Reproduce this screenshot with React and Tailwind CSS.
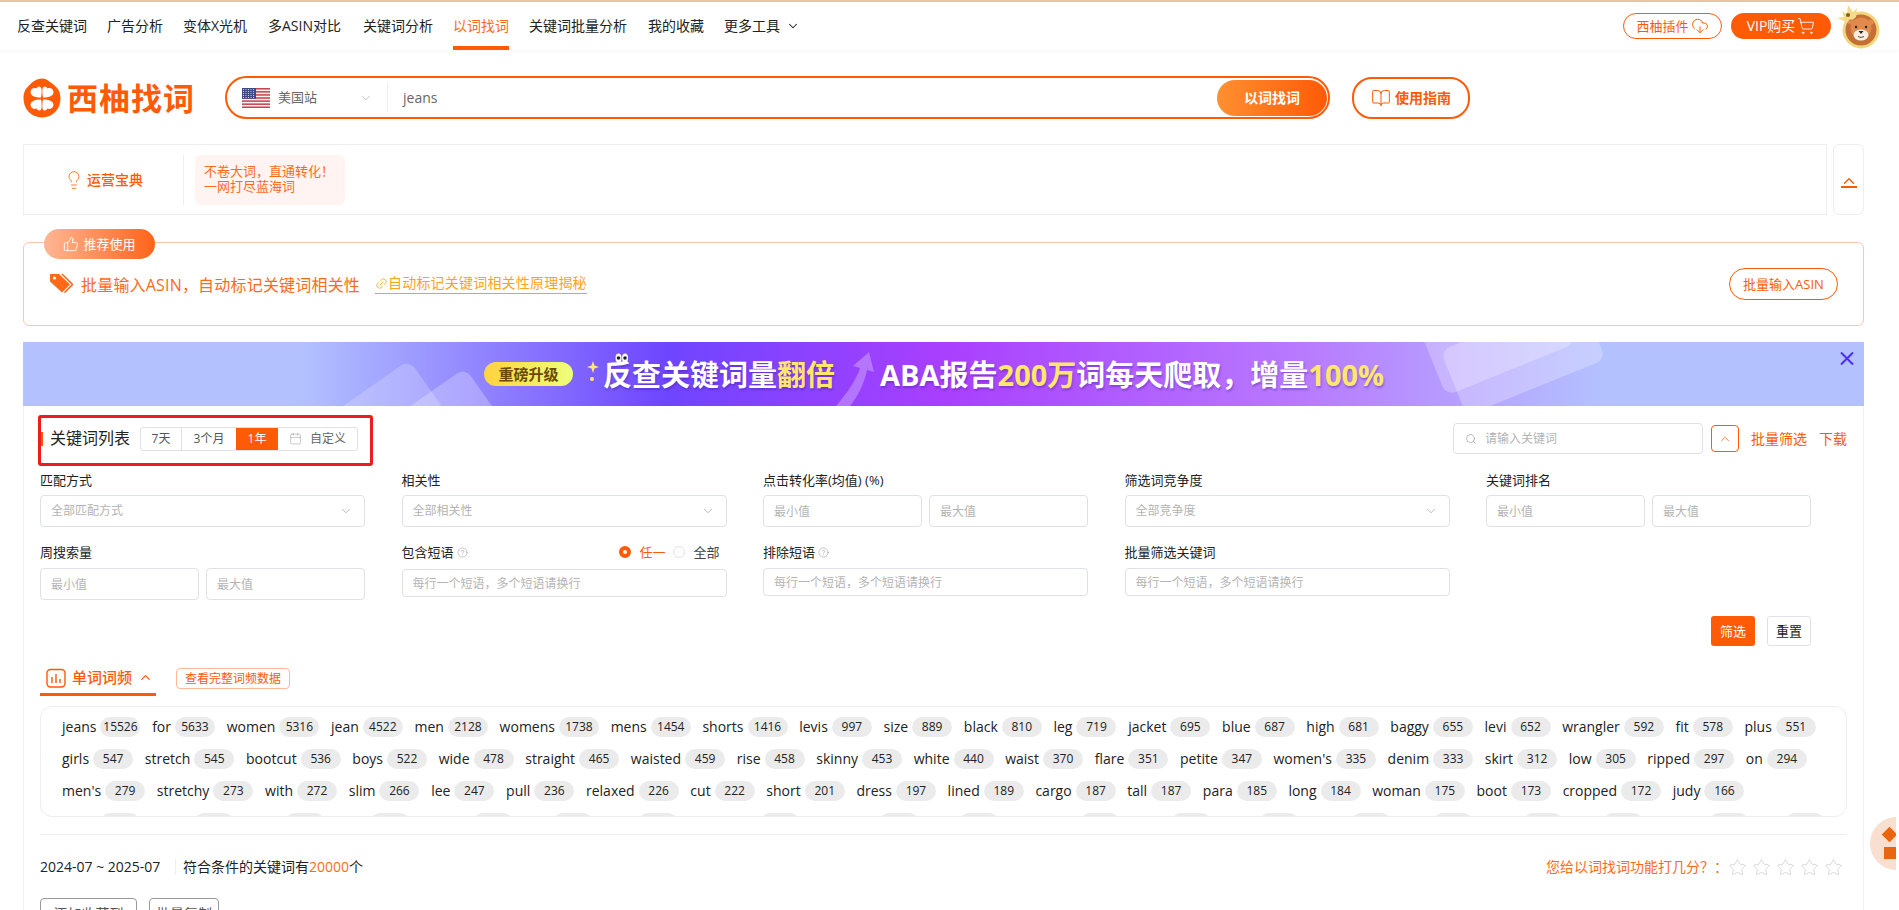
import React from "react";
import { ChevronDown, ChevronUp, Search, Lightbulb, ThumbsUp, Link2, BookOpen, ShoppingCart, CloudDownload, Calendar, CircleHelp, Star } from "lucide-react";

const navItems = [
  ["反查关键词", "w-[70px]"],
  ["广告分析", "w-[56px]"],
  ["变体X光机", "w-[65px]"],
  ["多ASIN对比", "w-[75px]"],
  ["关键词分析", "w-[70px]"],
  ["以词找词", "w-[56px]"],
  ["关键词批量分析", "w-[99px]"],
  ["我的收藏", "w-[56px]"],
  ["更多工具", "w-[73px]"],
];

const wordRows = [
  [["jeans", 15526], ["for", 5633], ["women", 5316], ["jean", 4522], ["men", 2128], ["womens", 1738], ["mens", 1454], ["shorts", 1416], ["levis", 997], ["size", 889], ["black", 810], ["leg", 719], ["jacket", 695], ["blue", 687], ["high", 681], ["baggy", 655], ["levi", 652], ["wrangler", 592], ["fit", 578], ["plus", 551]],
  [["girls", 547], ["stretch", 545], ["bootcut", 536], ["boys", 522], ["wide", 478], ["straight", 465], ["waisted", 459], ["rise", 458], ["skinny", 453], ["white", 440], ["waist", 370], ["flare", 351], ["petite", 347], ["women's", 335], ["denim", 333], ["skirt", 312], ["low", 305], ["ripped", 297], ["on", 294]],
  [["men's", 279], ["stretchy", 273], ["with", 272], ["slim", 266], ["lee", 247], ["pull", 236], ["relaxed", 226], ["cut", 222], ["short", 201], ["dress", 197], ["lined", 189], ["cargo", 187], ["tall", 187], ["para", 185], ["long", 184], ["woman", 175], ["boot", 173], ["cropped", 172], ["judy", 166]],
];

const row4Gaps = [38, 54, 51, 45, 63, 40, 45, 82, 79, 40, 81, 51, 48, 52, 42, 50, 40, 66, 36];

function Flag() {
  const stripes = [0, 1, 2, 3, 4, 5, 6];
  return (
    <svg width="28" height="20" viewBox="0 0 28 20" className="shrink-0">
      <rect width="28" height="20" fill="#f4f1f1" />
      {stripes.map((i) => (
        <rect key={i} y={i * 3.08} width="28" height="1.54" fill="#c8454f" />
      ))}
      <rect width="14" height="10.8" fill="#3c4a86" />
      {[1.5, 3.5, 5.5, 7.5, 9.5].map((y) =>
        [1.5, 4, 6.5, 9, 11.5].map((x) => <circle key={x + "-" + y} cx={x} cy={y} r="0.55" fill="#dfe3f2" />)
      )}
    </svg>
  );
}

function LogoMark() {
  return (
    <svg width="38" height="40" viewBox="0 0 38 40" className="shrink-0">
      <path d="M19 0.5C24 0.5 27 4 31 7C35 10 37.5 14 37.5 20.5C37.5 31 29.5 39.5 19 39.5C8.5 39.5 0.5 31 0.5 20.5C0.5 14 2.5 11 5.5 8C9 4.5 13 0.5 19 0.5Z" fill="#ff5a06" />
      <path d="M18 19.5C12 19.5 6.8 17.6 7.6 13.4C8.2 10 11.6 9.6 13.8 10.4C14.4 7.6 18.4 7.6 18.6 11.6C18.8 14.4 18.4 17.8 18 19.5Z" fill="#fff" />
      <path d="M20 19.5C26 19.5 31.2 17.6 30.4 13.4C29.8 10 26.4 9.6 24.2 10.4C23.6 7.6 19.6 7.6 19.4 11.6C19.2 14.4 19.6 17.8 20 19.5Z" fill="#fff" />
      <path d="M18 21.5C12 21.5 6.8 23.4 7.6 27.6C8.2 31 11.6 31.4 13.8 30.6C14.4 33.4 18.4 33.4 18.6 29.4C18.8 26.6 18.4 23.2 18 21.5Z" fill="#fff" />
      <path d="M20 21.5C26 21.5 31.2 23.4 30.4 27.6C29.8 31 26.4 31.4 24.2 30.6C23.6 33.4 19.6 33.4 19.4 29.4C19.2 26.6 19.6 23.2 20 21.5Z" fill="#fff" />
    </svg>
  );
}

function Avatar() {
  return (
    <svg width="46" height="47" viewBox="0 0 46 47" className="shrink-0">
      <circle cx="25" cy="27" r="18.5" fill="#f0d77e" />
      <circle cx="25" cy="27" r="15.5" fill="#c56f34" />
      <path d="M1 15L8 14L6 8L11 11L12 2L17 9L21 5L20 14L13 20Z" fill="#f3db8a" />
      <circle cx="12" cy="12" r="2" fill="#8b5a20" />
      <circle cx="15" cy="19" r="2.8" fill="#e08a4d" />
      <circle cx="35" cy="19" r="2.8" fill="#e08a4d" />
      <circle cx="25" cy="25" r="10.5" fill="#e08a4d" />
      <ellipse cx="25" cy="32" rx="7.5" ry="5.5" fill="#fbeee0" />
      <circle cx="20" cy="24" r="1.2" fill="#222" />
      <circle cx="30" cy="24" r="1.2" fill="#222" />
      <path d="M22.5 28H27.5L25 31Z" fill="#222" />
      <path d="M22 33.5Q25 35.5 28 33.5" fill="none" stroke="#222" strokeWidth="0.8" />
    </svg>
  );
}

function TagIcon() {
  return (
    <svg width="24" height="20" viewBox="0 0 24 20" className="shrink-0">
      <path d="M1 1H10L21 11.5L13 19.5L1 8.5Z" fill="#ff6a1a" />
      <circle cx="5.5" cy="5" r="1.6" fill="#fff" />
      <path d="M13 1L23.5 11.5L15.5 19.5" fill="none" stroke="#ff6a1a" strokeWidth="1.6" />
    </svg>
  );
}

function FreqIcon() {
  return (
    <svg width="20" height="20" viewBox="0 0 20 20" className="shrink-0" fill="none" stroke="#ff5a06">
      <rect x="1" y="1.5" width="18" height="17.5" rx="3.5" strokeWidth="1.4" />
      <path d="M6 9V15M10 6V15M14 11V15" strokeWidth="1.4" />
    </svg>
  );
}

function Select({ text }) {
  return (
    <div className="flex h-8 items-center justify-between rounded-[4px] border border-[#dfe1e8] pl-[10px] pr-[11px] text-xs text-[#b4b4b4]">
      <span>{text}</span>
      <ChevronDown size={14} strokeWidth={1.2} className="text-[#999]" />
    </div>
  );
}

function Input({ placeholder, cls = "h-8" }) {
  return (
    <input
      readOnly
      placeholder={placeholder}
      className={"w-full min-w-0 rounded-[4px] border border-[#dfe1e8] px-[10px] text-xs outline-none placeholder:text-[#b4b4b4] " + cls}
    />
  );
}

function Range() {
  return (
    <div className="flex gap-[7px]">
      <Input placeholder="最小值" />
      <Input placeholder="最大值" />
    </div>
  );
}

function Label({ children, help }) {
  return (
    <div className="flex h-5 items-center gap-[3px] text-[13px] text-[#222]">
      <span>{children}</span>
      {help && <CircleHelp size={11} strokeWidth={1.2} className="text-[#999]" />}
    </div>
  );
}

export default function App() {
  return (
    <div className="relative h-[910px] w-full overflow-hidden bg-white font-['Open_Sans','Noto_Sans_CJK_SC',sans-serif] text-sm text-[#222]">
      <div className="h-[2px] bg-[#e8c49c]" />
      <div className="flex h-12 items-stretch pl-[17px] pr-[17px] shadow-[0_2px_4px_rgba(0,0,0,0.03)]">
        <div className="flex gap-5">
          {navItems.map(([n, w]) => (
            <div
              key={n}
              className={
                "flex items-center gap-[6px] whitespace-nowrap border-b-4 pt-1 " + w + " " +
                (n === "以词找词" ? "border-[#ff5a06] text-[#ff6a1a]" : "border-transparent")
              }
            >
              {n}
              {n === "更多工具" && <ChevronDown size={14} strokeWidth={1.8} className="shrink-0" />}
            </div>
          ))}
        </div>
        <div className="ml-auto flex items-center gap-[5px]">
          <div className="flex h-[26px] w-[99px] items-center justify-center gap-[2px] rounded-full border border-[#ff5a06] text-[13px] text-[#ff5a06]">
            西柚插件
            <CloudDownload size={18} strokeWidth={1.3} />
          </div>
          <div className="ml-[4px] flex h-[26px] w-[100px] items-center justify-center gap-[2px] rounded-full bg-[#ff5a06] text-[14px] text-white">
            VIP购买
            <ShoppingCart size={18} strokeWidth={1.2} />
          </div>
          <Avatar />
        </div>
      </div>

      <div className="mt-[26px] flex items-center pl-[23px]">
        <LogoMark />
        <div className="ml-[6px] w-[158px] text-[31px] font-bold leading-[40px] tracking-[1px] text-[#ff5a06]">西柚找词</div>
        <div className="flex h-[43px] w-[1105px] items-center rounded-full border-2 border-[#ff5a06] pl-[15px] pr-[1px]">
          <Flag />
          <span className="ml-2 text-[13px] text-[#666]">美国站</span>
          <ChevronDown size={14} strokeWidth={1.2} className="ml-[42px] text-[#aaa]" />
          <div className="ml-[14px] h-7 w-px bg-[#eee]" />
          <span className="ml-[15px] text-[#666]">jeans</span>
          <div className="ml-auto flex h-9 w-[110px] items-center justify-center rounded-full bg-[linear-gradient(90deg,#ff9030,#ff5a06)] text-[14px] font-bold text-white">以词找词</div>
        </div>
        <div className="ml-[22px] flex h-[42px] w-[118px] items-center justify-center gap-1 rounded-[20px] border-2 border-[#ff5a06] text-[14px] font-bold text-[#ff5a06]">
          <BookOpen size={20} strokeWidth={1.2} />
          使用指南
        </div>
      </div>

      <div className="mt-[25px] flex gap-[6px] pl-[23px] pr-[35px]">
        <div className="flex h-[71px] flex-1 items-center border border-[#eee]">
          <div className="flex h-[50px] w-[160px] items-center justify-center gap-[3px] border-r border-[#eee]">
            <Lightbulb size={20} strokeWidth={1.2} className="text-[#ff7a33]" />
            <span className="text-[14px] font-medium text-[#ff5a06]">运营宝典</span>
          </div>
          <div className="ml-[11px] h-[50px] w-[150px] rounded-[6px] bg-[#fff4f1] pl-[9px] pt-[9px] text-[13px] leading-[15px] text-[#ff6a1a]">
            不卷大词，直通转化！
            <br />
            一网打尽蓝海词
          </div>
        </div>
        <div className="flex h-[71px] w-[31px] items-center justify-center rounded-[6px] border border-[#eee]">
          <div className="flex flex-col items-center">
            <ChevronUp size={18} strokeWidth={1.8} className="-mb-[4px] text-[#ff5a06]" />
            <div className="h-[2px] w-4 bg-[#ff5a06]" />
          </div>
        </div>
      </div>

      <div className="relative ml-[23px] mr-[35px] mt-[27px] flex h-[84px] items-start rounded-[6px] border border-[#ffc6ad] pl-[25px] pt-[30px]">
        <div className="absolute -top-[14px] left-5 flex h-[30px] w-[111px] items-center justify-center gap-1 rounded-full bg-[linear-gradient(90deg,#ffb694,#ff641a)] text-[13px] text-white">
          <ThumbsUp size={16} strokeWidth={1.3} />
          推荐使用
        </div>
        <TagIcon />
        <span className="ml-2 w-[279px] whitespace-nowrap text-[16px] leading-6 tracking-[0.19px] text-[#ff6a1a]">批量输入ASIN，自动标记关键词相关性</span>
        <span className="ml-[15px] flex h-[21px] items-center border-b border-[#ffa500] text-[14px] tracking-[0.2px] text-[#ffa31a]">
          <Link2 size={13} strokeWidth={1.5} className="-rotate-45" />
          自动标记关键词相关性原理揭秘
        </span>
        <div className="ml-auto mr-[25px] -mt-[5px] flex h-8 w-[109px] items-center justify-center rounded-full border border-[#ff5a06] text-[13px] text-[#ff5a06]">批量输入ASIN</div>
      </div>

      <div className="relative ml-[23px] mr-[35px] mt-4 h-16 overflow-hidden bg-[linear-gradient(90deg,#b3c2ff_0%,#b3c2ff_15%,#6e45ff_35%,#a93fff_50%,#b87cff_70%,#b3c2ff_86%)]">
        <div className="absolute left-[300px] top-[45px] h-[80px] w-[120px] -rotate-[35deg] rounded-[10px] bg-white/20" />
        <div className="absolute left-[365px] top-[50px] h-[80px] w-[110px] -rotate-[35deg] rounded-[10px] bg-white/25" />
        <div className="absolute left-[1405px] -top-[40px] h-[70px] w-[140px] -rotate-[22deg] rounded-[10px] bg-white/25" />
        <div className="absolute left-[1425px] -top-[22px] h-[70px] w-[150px] -rotate-[22deg] rounded-[10px] bg-white/25" />
        <div className="flex h-full items-center pl-[461px] text-[29px] font-bold leading-none text-white [text-shadow:1px_2px_2px_rgba(60,20,140,0.35)]">
          <div className="flex h-6 w-[89px] items-center justify-center rounded-full bg-[linear-gradient(90deg,#ffd23f,#eeff7a)] text-[15px] font-bold text-[#6b4a00] [text-shadow:none]">重磅升级</div>
          <svg width="12" height="26" viewBox="0 0 12 26" className="ml-[14px] mr-[4px]">
            <path d="M6 0L7.5 4.5L12 6L7.5 7.5L6 12L4.5 7.5L0 6L4.5 4.5Z" fill="#ffe66d" />
            <circle cx="5" cy="18" r="2" fill="#ffe66d" />
          </svg>
          <span className="relative whitespace-nowrap">
            反查关键词量<span className="text-[#ffe66d]">翻倍</span>
            <svg width="14" height="10" viewBox="0 0 14 10" className="absolute -top-[7px] left-[12px]">
              <ellipse cx="3.5" cy="5" rx="3" ry="4.5" fill="#fff" />
              <ellipse cx="10" cy="5" rx="3" ry="4.5" fill="#fff" />
              <circle cx="3.5" cy="5" r="1.8" fill="#222" />
              <circle cx="10" cy="5" r="1.8" fill="#222" />
            </svg>
          </span>
          <svg width="44" height="64" viewBox="0 0 44 64" className="-ml-px shrink-0">
            <path d="M2 64C14 50 22 38 26 26L19 24L35 10L40 30L33 28C30 42 24 54 16 64Z" fill="#fff" fillOpacity="0.28" />
          </svg>
          <span className="ml-[2px] whitespace-nowrap">
            ABA报告<span className="text-[#ffe66d]">200万</span>词每天爬取，增量<span className="text-[#ffe66d]">100%</span>
          </span>
        </div>
        <svg width="14" height="13" viewBox="0 0 14 13" className="absolute right-[10px] top-[10px]">
          <path d="M1 0.5L13 12.5M13 0.5L1 12.5" stroke="#4a2bff" strokeWidth="2" />
        </svg>
      </div>

      <div className="relative ml-[23px] mr-[35px] h-[600px] border-x border-[#f2f2f2] px-4">
        <div className="absolute left-[14px] top-[9px] h-[51px] w-[335px] rounded-[3px] border-[3px] border-[#ee1c1c]" />
        <div className="flex items-center pt-[17px]">
          <div className="h-[14px] w-[3px] bg-[#ff5a06]" />
          <span className="ml-[7px] text-[16px] leading-[31px]">关键词列表</span>
          <div className="ml-[10px] flex h-6 w-[218px] items-stretch rounded-[3px] border border-[#dfe1e8] text-xs text-[#555]">
            <div className="flex w-[41px] items-center justify-center border-r border-[#dfe1e8]">7天</div>
            <div className="flex w-[54px] items-center justify-center">3个月</div>
            <div className="flex w-[42px] items-center justify-center bg-[#ff5a06] text-white">1年</div>
            <div className="flex flex-1 items-center justify-center gap-[8px] text-[#666]">
              <Calendar size={13} strokeWidth={1.2} className="text-[#aaa]" />
              自定义
            </div>
          </div>
          <div className="ml-auto flex h-[31px] w-[250px] items-center rounded-[4px] border border-[#dfe1e8] pl-[11px] text-xs text-[#b4b4b4]">
            <Search size={12} strokeWidth={1.3} className="text-[#999]" />
            <span className="ml-[8px]">请输入关键词</span>
          </div>
          <div className="ml-2 flex h-[27px] w-7 items-center justify-center rounded-[4px] border border-[#ff5a06] text-[#ff5a06]">
            <ChevronUp size={14} strokeWidth={1.3} />
          </div>
          <span className="ml-3 text-[#ff5a06]">批量筛选</span>
          <span className="ml-3 text-[#ff5a06]">下载</span>
        </div>

        <div className="mt-4 grid grid-cols-5 gap-x-[36.5px] gap-y-[15px] pr-[36px]">
          <div><div className="mb-[5px]"><Label>匹配方式</Label></div><Select text="全部匹配方式" /></div>
          <div><div className="mb-[5px]"><Label>相关性</Label></div><Select text="全部相关性" /></div>
          <div><div className="mb-[5px]"><Label>点击转化率(均值) (%)</Label></div><Range /></div>
          <div><div className="mb-[5px]"><Label>筛选词竞争度</Label></div><Select text="全部竞争度" /></div>
          <div><div className="mb-[5px]"><Label>关键词排名</Label></div><Range /></div>

          <div><div className="mb-[6px]"><Label>周搜索量</Label></div><Range /></div>
          <div>
            <div className="mb-[7px] flex items-center justify-between pr-[7px]">
              <Label help>包含短语</Label>
              <div className="flex items-center text-[13px]">
                <span className="h-3 w-3 rounded-full border-[4px] border-[#ff5a06]" />
                <span className="ml-2 text-[#ff5a06]">任一</span>
                <span className="ml-2 h-3 w-3 rounded-full border border-[#dfe1e8]" />
                <span className="ml-2 text-[#444]">全部</span>
              </div>
            </div>
            <Input placeholder="每行一个短语，多个短语请换行" cls="h-[28px]" />
          </div>
          <div><div className="mb-[6px]"><Label help>排除短语</Label></div><Input placeholder="每行一个短语，多个短语请换行" cls="h-[28px]" /></div>
          <div><div className="mb-[6px]"><Label>批量筛选关键词</Label></div><Input placeholder="每行一个短语，多个短语请换行" cls="h-[28px]" /></div>
          <div />
        </div>

        <div className="mt-4 flex justify-end gap-3 pr-[36px] text-[13px]">
          <div className="flex h-[30px] w-11 items-center justify-center rounded-[3px] bg-[#ff5a06] text-white">筛选</div>
          <div className="flex h-[30px] w-11 items-center justify-center rounded-[3px] border border-[#dfe1e8]">重置</div>
        </div>

        <div className="mt-[22px] flex items-start">
          <div className="flex h-[28px] w-[116px] items-start gap-[6px] border-b-[3px] border-[#ff5a06] pl-[6px] text-[15px] font-medium text-[#ff5a06]">
            <FreqIcon />
            <span className="-mt-px leading-[20px]">单词词频</span>
            <ChevronUp size={15} strokeWidth={2} className="mt-[2px]" />
          </div>
          <div className="ml-5 flex h-[21px] w-[114px] items-center justify-center rounded-[4px] border border-[#ffb899] text-xs text-[#ff5a06]">查看完整词频数据</div>
        </div>

        <div className="mt-[10px] flex h-[111px] flex-col gap-3 overflow-hidden rounded-[12px] border border-[#eee] pl-[21px] pt-[10px]">
          {wordRows.map((row, i) => (
            <div key={i} className="flex h-5 shrink-0 items-center">
              {row.map(([w, c]) => (
                <div key={w} className="mr-[11.7px] flex items-center">
                  <span className="text-[14px] leading-5">{w}</span>
                  <span className="ml-1 flex h-5 w-10 items-center justify-center rounded-full bg-[#ebebeb] text-xs">{c}</span>
                </div>
              ))}
            </div>
          ))}
          <div className="flex h-5 shrink-0">
            {row4Gaps.map((g, i) => (
              <span key={i} style={{ marginLeft: g }} className="h-5 w-10 rounded-full bg-[#ebebeb]" />
            ))}
          </div>
        </div>

        <div className="mt-[17px] h-px bg-[#eee]" />

        <div className="mt-[22px] flex h-5 items-center">
          <span className="w-[128px] whitespace-nowrap">2024-07 ~ 2025-07</span>
          <span className="mx-[7px] h-4 w-px bg-[#eee]" />
          <span>
            符合条件的关键词有<span className="text-[#ff6a1a]">20000</span>个
          </span>
          <span className="ml-auto text-[#ff6a1a]">您给以词找词功能打几分？：</span>
          <div className="mr-[4px] flex gap-[5px]">
            {[0, 1, 2, 3, 4].map((i) => (
              <Star key={i} size={19} strokeWidth={1} className="text-[#cfcfcf]" />
            ))}
          </div>
        </div>

        <div className="mt-[21px] flex gap-3">
          <div className="flex h-8 w-[97px] items-center justify-center rounded-[4px] border border-[#999] text-[#555]">添加收藏到</div>
          <div className="flex h-8 w-[70px] items-center justify-center rounded-[4px] border border-[#999] text-[#555]">批量复制</div>
        </div>
      </div>

      <div className="absolute left-[1870px] top-[817px] h-[53px] w-[26px] overflow-hidden">
        <div className="flex h-[53px] w-[53px] flex-col items-center rounded-full bg-[#f8dfd0] pr-[14px] pt-[12px]">
          <div className="h-[11px] w-[11px] rotate-45 bg-[#e8660f]" />
          <div className="mt-[7px] h-3 w-3 bg-[#e8660f]" />
        </div>
      </div>
    </div>
  );
}
